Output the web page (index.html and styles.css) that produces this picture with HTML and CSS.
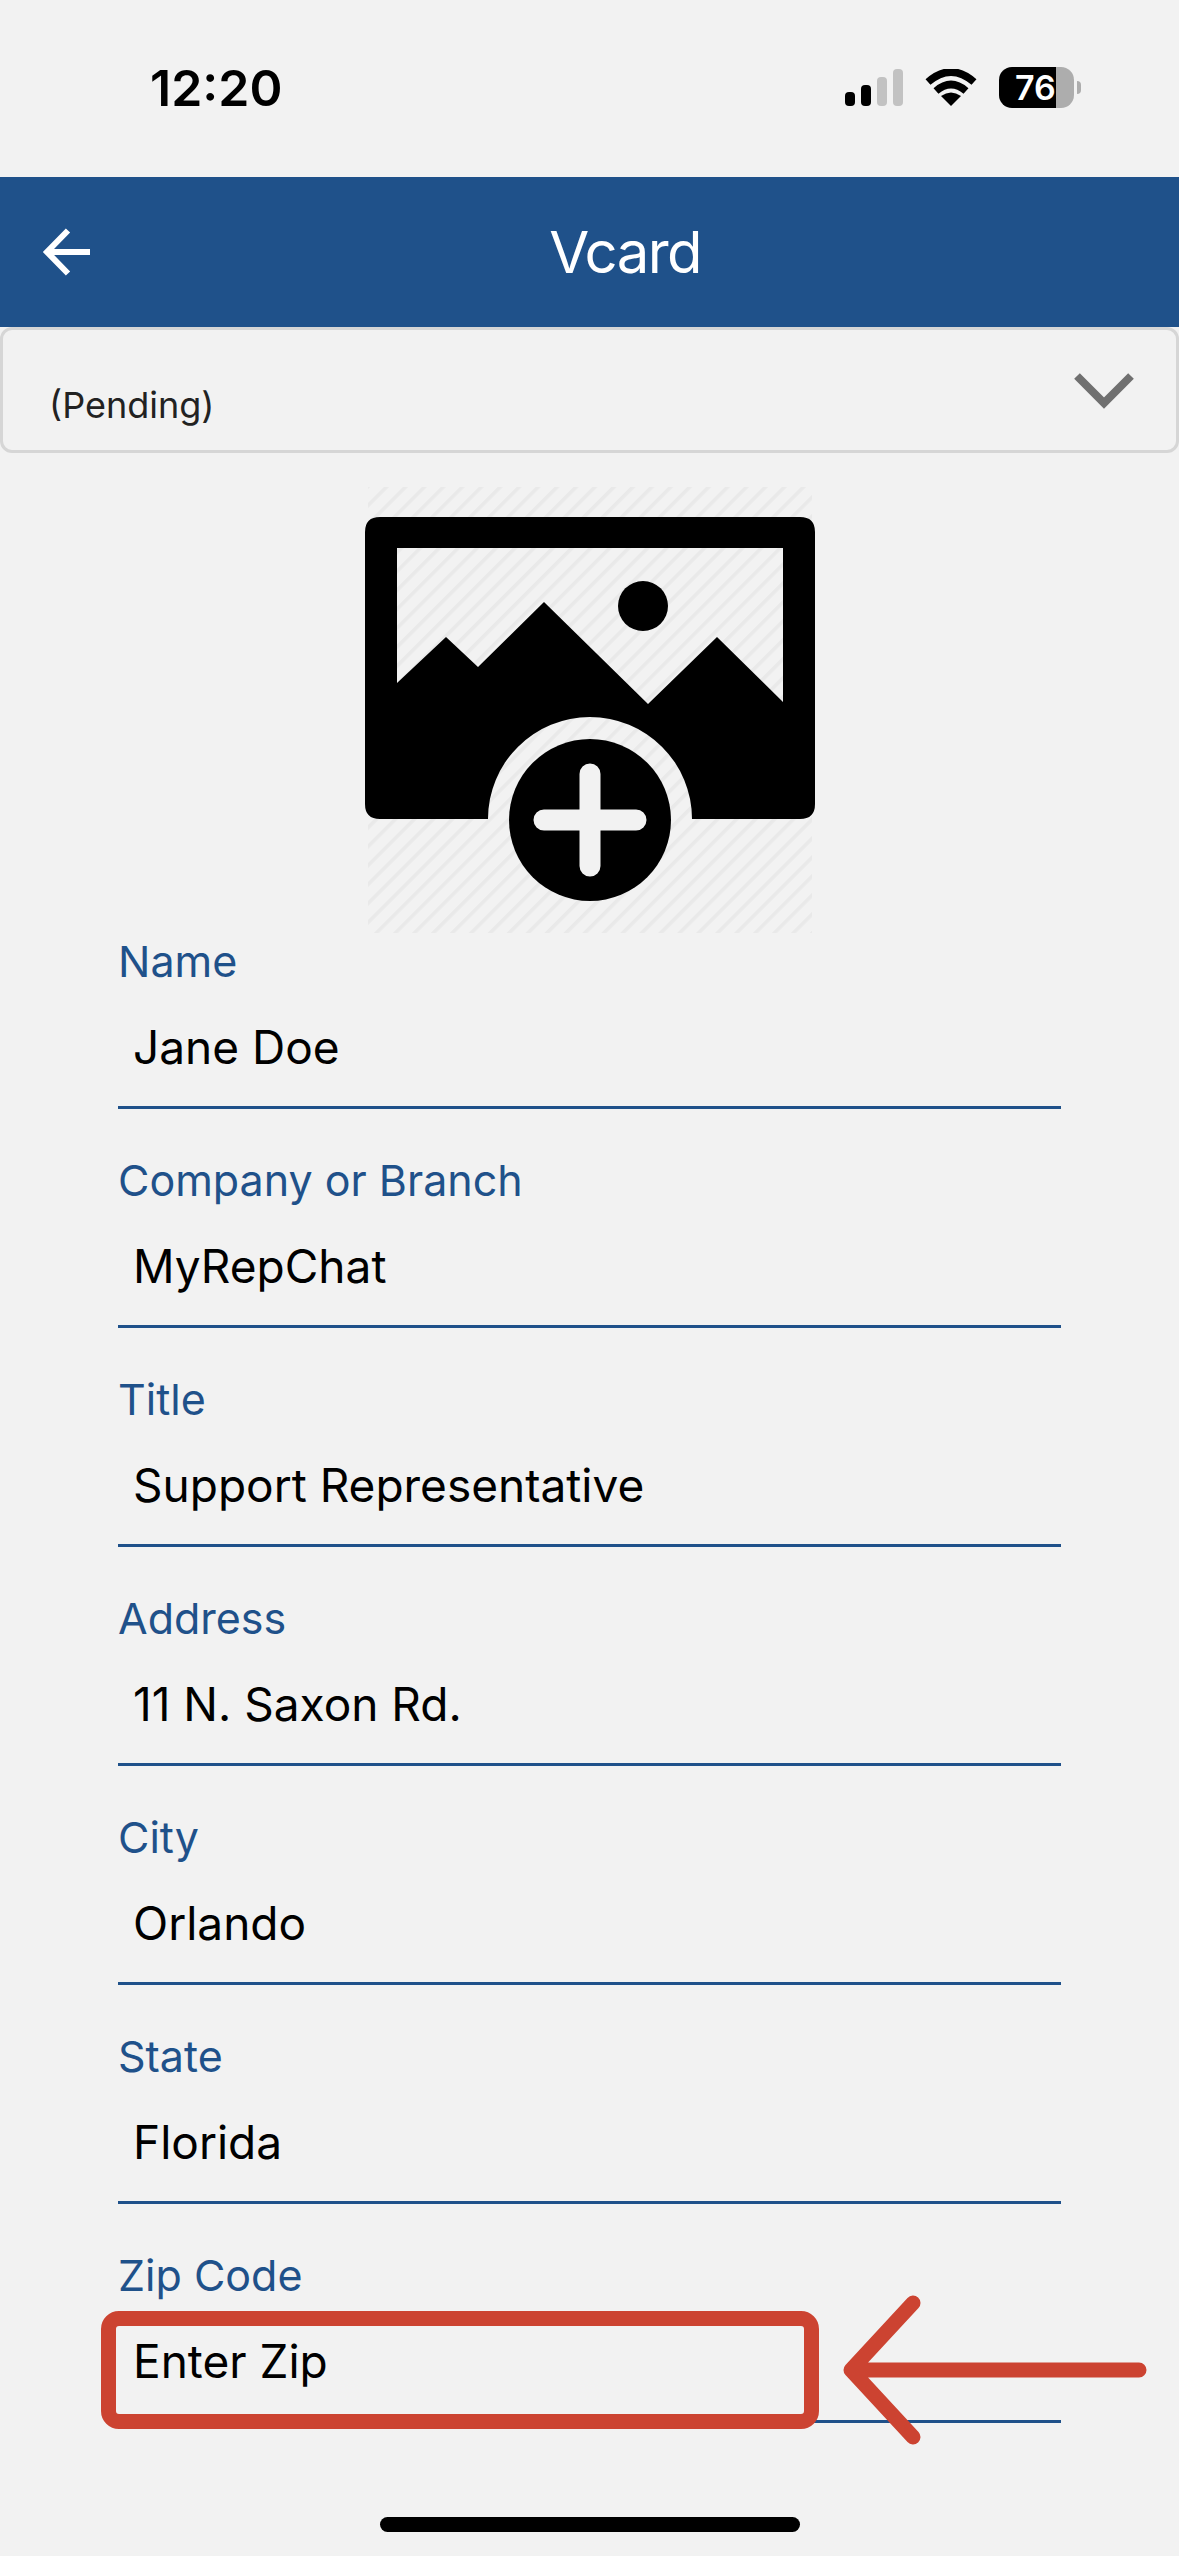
FILE: index.html
```html
<!DOCTYPE html>
<html lang="en">
<head>
    <meta charset="UTF-8">
    <meta name="viewport" content="width=device-width, initial-scale=1.0">
    <title>Vcard</title>
    <link rel="stylesheet" href="styles.css">
</head>
<body>
    <div class="status-bar">
        <span class="status-time">12:20</span>
        <div class="status-icons">
            <svg class="signal" width="58" height="37" viewBox="0 0 58 37">
                <rect x="0" y="23" width="10" height="14" rx="4" fill="#000"></rect>
                <rect x="16" y="16" width="10" height="21" rx="4" fill="#000"></rect>
                <rect x="32" y="8" width="10" height="29" rx="4" fill="#c2c2c2"></rect>
                <rect x="48" y="0" width="10" height="37" rx="4" fill="#c2c2c2"></rect>
            </svg>
            <svg class="wifi" width="52" height="37" viewBox="0 0 52 37">
                <path d="M3 13 Q26 -7 49 13 M11 22 Q26 9 41 22" fill="none" stroke="#000" stroke-width="7.5"></path>
                <path d="M26 37 L16 27 Q26 20 36 27 Z" fill="#000"></path>
            </svg>
            <div class="battery">
                <div class="battery-body"><span class="battery-level">76</span></div>
                <div class="battery-tip"></div>
            </div>
        </div>
    </div>

    <div class="app-header">
        <svg class="back-arrow" width="50" height="50" viewBox="0 0 50 50">
            <path d="M50 25 H8 M28 3.5 L7 25 L28 46.5" fill="none" stroke="#fff" stroke-width="6"></path>
        </svg>
        <h1>Vcard</h1>
    </div>

    <div class="status-select">
        <span>(Pending)</span>
        <svg class="chevron" width="60" height="36" viewBox="0 0 60 36">
            <path d="M3 3 L30 30 L57 3" fill="none" stroke="#707070" stroke-width="8"></path>
        </svg>
    </div>

    <div class="photo">
        <svg width="450" height="446" viewBox="0 0 450 446">
            <defs>
                <pattern id="stripes" width="13.4" height="20" patternUnits="userSpaceOnUse" patternTransform="rotate(45)">
                    <rect x="0" y="0" width="3.5" height="20" fill="#e9e9e9"></rect>
                </pattern>
            </defs>
            <rect x="3" y="0" width="444" height="446" fill="url(#stripes)"></rect>
            <path fill-rule="evenodd" fill="#000" d="M15 30 H435 Q450 30 450 45 V317 Q450 332 435 332 H327 A102 102 0 0 0 123 332 H15 Q0 332 0 317 V45 Q0 30 15 30 Z M32 61 V196 L81 150 L113 180 L179 115 L283 217 L352 150 L418 215 V61 Z"></path>
            <circle cx="278" cy="119" r="25" fill="#000"></circle>
            <circle cx="225" cy="333" r="81" fill="#000"></circle>
            <path d="M225 287 V379 M179 333 H271" stroke="#f2f2f2" stroke-width="21" stroke-linecap="round"></path>
        </svg>
    </div>

    <div class="form">
        <div class="field"><label>Name</label><div class="value">Jane Doe</div></div>
        <div class="field"><label>Company or Branch</label><div class="value">MyRepChat</div></div>
        <div class="field"><label>Title</label><div class="value">Support Representative</div></div>
        <div class="field"><label>Address</label><div class="value">11 N. Saxon Rd.</div></div>
        <div class="field"><label>City</label><div class="value">Orlando</div></div>
        <div class="field"><label>State</label><div class="value">Florida</div></div>
        <div class="field"><label>Zip Code</label><div class="value">Enter Zip</div></div>
    </div>

    <div class="callout-box"></div>
    <svg class="callout-arrow" width="310" height="150" viewBox="0 0 310 150">
        <path d="M296 75 H12 M70 8 L8 75 L70 142" fill="none" stroke="#cc4331" stroke-width="15" stroke-linecap="round" stroke-linejoin="round"></path>
    </svg>

    <div class="home-bar"></div>
</body>
</html>
```

FILE: styles.css
```css
* {
    margin: 0;
    padding: 0;
    box-sizing: border-box;
}

:root {
    --blue: #1f518a;
    --background: #f2f2f2;
    --red: #cc4331;
}

body {
    position: relative;
    width: 1179px;
    height: 2556px;
    overflow: hidden;
    font-family: Inter, "Liberation Sans", sans-serif;
    background: var(--background);
    color: #000;
}

.status-bar {
    height: 177px;
    display: flex;
    justify-content: space-between;
    align-items: flex-start;
    padding: 57px 98px 0 150px;
}

.status-time {
    font-size: 50px;
    line-height: 62px;
    font-weight: 600;
}

.status-icons {
    display: flex;
    align-items: center;
    gap: 22px;
    margin-top: 10px;
}

.battery {
    display: flex;
    align-items: center;
    gap: 3px;
}

.battery-body {
    width: 75px;
    height: 41px;
    border-radius: 13px;
    background: linear-gradient(to right, #000 76%, #adadad 76%);
    color: #fff;
    overflow: hidden;
}

.battery-level {
    display: block;
    padding-left: 16px;
    font-size: 34px;
    line-height: 41px;
    font-weight: 600;
}

.battery-tip {
    width: 4px;
    height: 13px;
    border-radius: 0 7px 7px 0;
    background: #adadad;
}

.app-header {
    position: relative;
    height: 150px;
    background: var(--blue);
    display: flex;
    align-items: center;
    justify-content: center;
    padding-left: 71px;
}

.app-header h1 {
    font-size: 58px;
    font-weight: 400;
    letter-spacing: -1.6px;
    color: #fff;
}

.back-arrow {
    position: absolute;
    left: 40px;
    top: 50px;
}

.status-select {
    height: 126px;
    border: 3px solid #d6d6d6;
    border-radius: 12px;
    display: flex;
    justify-content: space-between;
    align-items: flex-start;
    padding: 53px 42px 0 46px;
    font-size: 36px;
    color: #222;
}

.chevron {
    margin-top: -10px;
}

.photo {
    display: flex;
    justify-content: center;
    margin-top: 34px;
    height: 446px;
}

.field {
    display: flex;
    flex-direction: column;
    justify-content: flex-end;
    height: 219px;
    margin: 0 118px;
    border-bottom: 3px solid var(--blue);
    padding-bottom: 31px;
}

.field:first-child {
    height: 176px;
}

.field label {
    font-size: 43px;
    line-height: 52px;
    color: var(--blue);
}

.value {
    font-size: 46px;
    line-height: 56px;
    margin-top: 32px;
    padding-left: 15px;
}

.callout-box {
    position: absolute;
    left: 101px;
    top: 2311px;
    width: 718px;
    height: 118px;
    border: 15px solid var(--red);
    border-radius: 18px;
}

.callout-arrow {
    position: absolute;
    left: 843px;
    top: 2295px;
}

.home-bar {
    position: absolute;
    left: 380px;
    top: 2517px;
    width: 420px;
    height: 15px;
    border-radius: 8px;
    background: #000;
}
```
